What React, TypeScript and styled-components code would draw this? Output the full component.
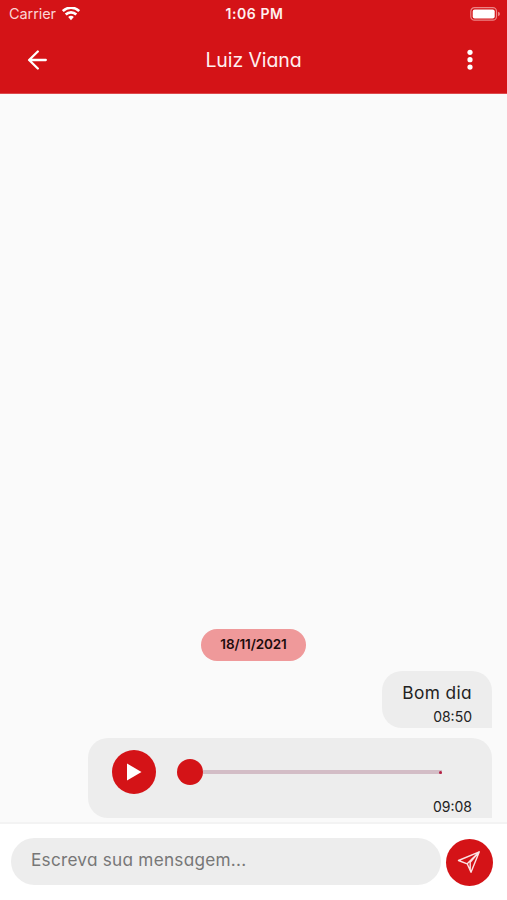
import React from "react";
import styled, { createGlobalStyle } from "styled-components";

const RED = "#d41317";

const GlobalStyle = createGlobalStyle`
  * { box-sizing: border-box; }
  body { margin: 0; background: #fff; }
`;

const Screen = styled.div`
  display: flex;
  flex-direction: column;
  width: 507px;
  height: 900px;
  overflow: hidden;
  background: #fafafa;
  color: #222;
  font-family: Inter, "Noto Sans", sans-serif;
  font-feature-settings: "cv11" 1;
`;

const Header = styled.header`
  flex: none;
  height: 94px;
  background: ${RED};
  border-bottom: 1px solid #dd4a4d;
  color: #fff0ef;
`;

const StatusBar = styled.div`
  display: grid;
  grid-template-columns: 1fr auto 1fr;
  align-items: center;
  height: 27px;
  padding: 0 6px 0 8px;
  font-family: Inter, sans-serif;
  font-feature-settings: normal;
`;

const Carrier = styled.div`
  display: flex;
  align-items: center;
  gap: 6px;
  margin-left: 1px;
  font-size: 14.5px;
  letter-spacing: -0.08px;
  color: #fbd5d5;
`;

const Clock = styled.div`
  font-size: 14px;
  font-weight: 600;
  letter-spacing: 0.6px;
`;

const Power = styled.div`
  display: flex;
  justify-content: flex-end;
`;

const NavBar = styled.div`
  display: grid;
  grid-template-columns: 60px 1fr 60px;
  align-items: center;
  height: 66px;
  padding: 0 7px;
`;

const IconButton = styled.button`
  display: flex;
  justify-content: center;
  align-items: center;
  height: 40px;
  padding: 0 0 1px;
  border: 0;
  background: none;
`;

const Title = styled.h1`
  margin: 0;
  text-align: center;
  font-size: 19.5px;
  font-weight: 400;
  letter-spacing: -0.1px;
`;

const Messages = styled.main`
  flex: 1;
  display: flex;
  flex-direction: column;
  justify-content: flex-end;
  align-items: flex-end;
  gap: 10px;
  padding: 0 15px 4px 0;
`;

const DatePill = styled.div`
  align-self: center;
  width: 105px;
  height: 32px;
  margin-left: 15px;
  border-radius: 16px;
  background: #ef999a;
  color: #1d0c0c;
  text-align: center;
  font-size: 13.5px;
  line-height: 31px;
  font-weight: 600;
  letter-spacing: -0.1px;
`;

const Bubble = styled.article<{ $width: number; $height: number }>`
  display: flex;
  flex-direction: column;
  justify-content: space-between;
  width: ${(p) => p.$width}px;
  height: ${(p) => p.$height}px;
  padding: 12px 20px 2px;
  border-radius: 20px 20px 0 20px;
  background: #ededed;
`;

const MessageText = styled.p`
  margin: 0;
  text-align: right;
  white-space: nowrap;
  font-size: 17.3px;
  line-height: 20px;
  letter-spacing: 0.4px;
`;

const Time = styled.time`
  text-align: right;
  font-size: 14px;
  line-height: 18px;
`;

const Player = styled.div`
  display: flex;
  align-items: center;
  height: 44px;
  margin-left: 4px;
`;

const PlayButton = styled.button`
  display: flex;
  align-items: center;
  justify-content: center;
  width: 44px;
  height: 44px;
  padding: 0;
  border: 0;
  border-radius: 50%;
  background: ${RED};
`;

const Slider = styled.div`
  display: flex;
  align-items: center;
  width: 265px;
  margin-left: 21px;
`;

const Thumb = styled.div`
  width: 26px;
  height: 26px;
  border-radius: 50%;
  background: ${RED};
`;

const Track = styled.div`
  flex: 1;
  display: flex;
  align-items: center;
  justify-content: flex-end;
  height: 4px;
  background: #d3bdc6;
`;

const TrackEnd = styled.span`
  width: 3px;
  height: 3px;
  border-radius: 50%;
  background: #b51f43;
`;

const Composer = styled.footer`
  flex: none;
  display: flex;
  align-items: flex-start;
  gap: 5px;
  height: 78px;
  padding: 14px 14px 0 11px;
  border-top: 2px solid #f3f3f3;
  background: #fff;
`;

const Input = styled.input`
  width: 430px;
  height: 47px;
  padding: 0 20px 4px;
  border: 0;
  border-radius: 24px;
  outline: 0;
  background: #ededed;
  font: inherit;
  font-feature-settings: inherit;
  font-size: 17.2px;
  letter-spacing: 0.25px;
  &::placeholder { color: #777; opacity: 1; }
`;

const SendButton = styled.button`
  display: flex;
  align-items: center;
  justify-content: center;
  width: 47px;
  height: 47px;
  margin-top: 1px;
  padding: 0 1px 1px 0;
  border: 0;
  border-radius: 50%;
  background: ${RED};
`;

const WifiIcon = () => (
  <svg width="18" height="14" viewBox="0 0 18 14" fill="none" stroke="#fff" strokeWidth="2.6">
    <path d="M.8 4.1C5.4-.4 12.6-.4 17.2 4.1" />
    <path d="M3.7 7.5C6.7 4.6 11.3 4.6 14.3 7.5" />
    <path d="M6.2 10.1C7.8 8.4 10.2 8.4 11.8 10.1L9 13.2Z" fill="#fff" stroke="none" />
  </svg>
);

const BatteryIcon = () => (
  <svg width="31" height="14" viewBox="0 0 31 14" fill="none">
    <rect x=".8" y=".7" width="25.7" height="12.5" rx="3.7" stroke="#ec8586" strokeWidth="1.2" />
    <rect x="2.7" y="2.5" width="22" height="9" rx="2" fill="#fff" />
    <path d="M28 4.8q2 .6 2 2.2t-2 2.2z" fill="#ec8586" />
  </svg>
);

const BackIcon = () => (
  <svg width="20" height="20" viewBox="0 0 20 20" fill="none" stroke="#fff" strokeWidth="2.3" strokeLinecap="round" strokeLinejoin="round">
    <path d="M10.8 1.5 2.1 10l8.7 8.5M2.3 10h16.5" />
  </svg>
);

const MoreIcon = () => (
  <svg width="6" height="22" viewBox="0 0 6 22" fill="#fff">
    <circle cx="3" cy="3.3" r="2.6" />
    <circle cx="3" cy="10.7" r="2.6" />
    <circle cx="3" cy="18.1" r="2.6" />
  </svg>
);

const PlayIcon = () => (
  <svg width="16" height="18" viewBox="0 0 16 18" fill="#fff">
    <path d="M1 .5 15.5 9 1 17.5z" />
  </svg>
);

const SendIcon = () => (
  <svg width="24" height="24" viewBox="0 0 24 24" fill="none" stroke="#fbe3e3" strokeWidth="1.4" strokeLinejoin="round">
    <path d="M22.3 1.8 1.5 10.5l8.7 3.3 3.8 8.5zM22.3 1.8 10.2 13.8M22.3 1.8 13.2 12.4v7.5" />
  </svg>
);

export default function App() {
  return (
    <Screen>
      <GlobalStyle />
      <Header>
        <StatusBar>
          <Carrier>Carrier <WifiIcon /></Carrier>
          <Clock>1:06 PM</Clock>
          <Power><BatteryIcon /></Power>
        </StatusBar>
        <NavBar>
          <IconButton aria-label="Voltar"><BackIcon /></IconButton>
          <Title>Luiz Viana</Title>
          <IconButton aria-label="Opções"><MoreIcon /></IconButton>
        </NavBar>
      </Header>
      <Messages>
        <DatePill>18/11/2021</DatePill>
        <Bubble $width={110} $height={57}>
          <MessageText>Bom dia</MessageText>
          <Time>08:50</Time>
        </Bubble>
        <Bubble $width={404} $height={80}>
          <Player>
            <PlayButton aria-label="Reproduzir"><PlayIcon /></PlayButton>
            <Slider>
              <Thumb />
              <Track><TrackEnd /></Track>
            </Slider>
          </Player>
          <Time>09:08</Time>
        </Bubble>
      </Messages>
      <Composer>
        <Input placeholder="Escreva sua mensagem..." />
        <SendButton aria-label="Enviar"><SendIcon /></SendButton>
      </Composer>
    </Screen>
  );
}
